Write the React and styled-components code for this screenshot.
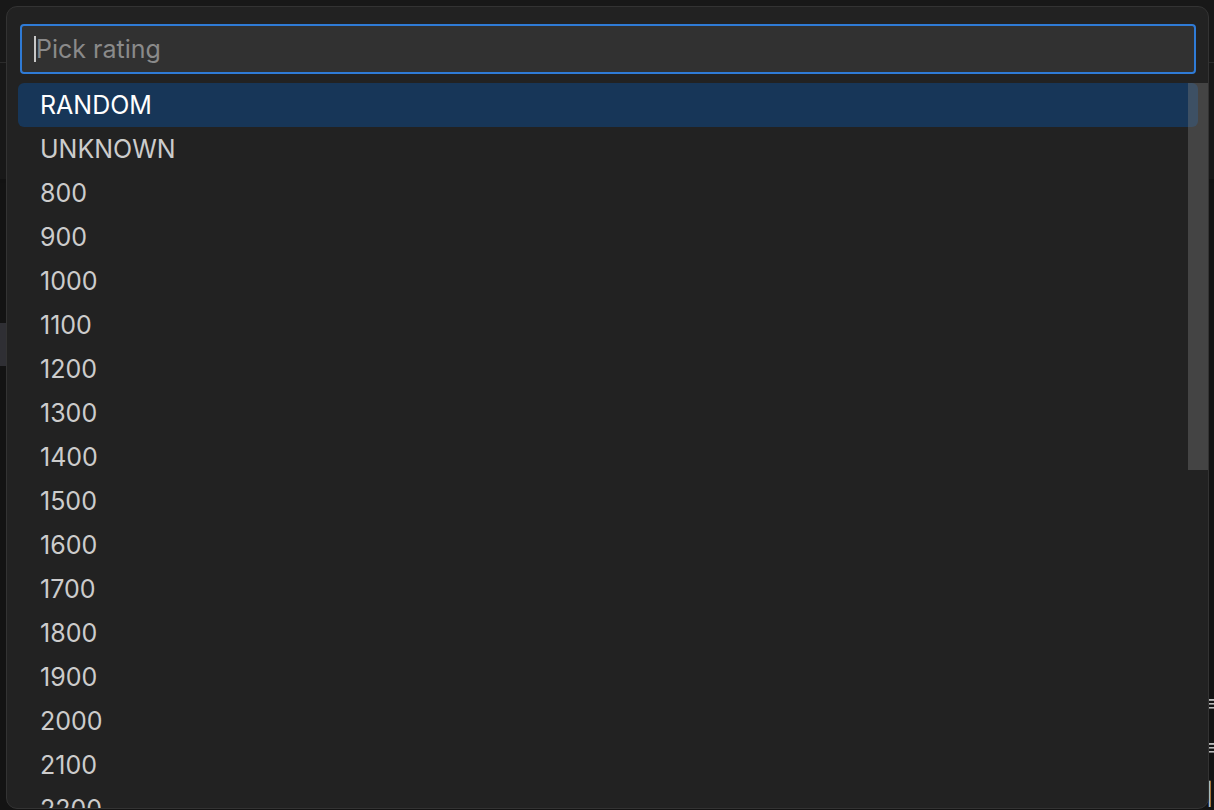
import styled, { createGlobalStyle } from 'styled-components'

const GlobalStyle = createGlobalStyle`
	html, body {
		margin: 0;
		padding: 0;
		background: #181818;
		overflow: hidden;
	}
	#root {
		width: 1214px;
		height: 810px;
	}
`

const ratings = ['RANDOM', 'UNKNOWN']
for (let r = 800; r <= 3500; r += 100) ratings.push(String(r))

const App = () => {
	return (
		<Screen>
			<GlobalStyle />
			<Workbench>
				<TopBar />
				<Toolbar />
				<SideArea>
					<SideItem $top={140} />
					<EdgeGlyph $top={507}>≡</EdgeGlyph>
					<EdgeGlyph $top={551}>≡</EdgeGlyph>
					<EdgeGlyph $top={598}>|</EdgeGlyph>
				</SideArea>
			</Workbench>

			<QuickPick>
				<InputRow>
					<Input>
						<Caret />
						<Placeholder>Pick rating</Placeholder>
					</Input>
				</InputRow>
				<List>
					{ratings.map((label, i) => (
						<Row key={label} $selected={i === 0}>
							{label}
						</Row>
					))}
					<Scrollbar />
				</List>
			</QuickPick>
		</Screen>
	)
}

const Screen = styled.div`
	position: relative;
	width: 1214px;
	height: 810px;
	overflow: hidden;
	font-family: Inter, 'Liberation Sans', sans-serif;
`

const Workbench = styled.div`
	display: flex;
	flex-direction: column;
	height: 100%;
`

const TopBar = styled.div`
	height: 62px;
	background: #181818;
	border-bottom: 1px solid #2b2b2b;
`

const Toolbar = styled.div`
	height: 116px;
	background: #181818;
	border-bottom: 4px solid #121212;
`

const SideArea = styled.div`
	position: relative;
	flex: 1;
	background: #131313;
`

const SideItem = styled.div`
	position: absolute;
	left: 0;
	top: ${p => p.$top}px;
	width: 20px;
	height: 43px;
	background: #2f2f34;
`

const EdgeGlyph = styled.div`
	position: absolute;
	left: 1206px;
	top: ${p => p.$top}px;
	font-size: 22px;
	color: #bbbbbb;
`

const QuickPick = styled.div`
	position: absolute;
	left: 6px;
	top: 6px;
	width: 1203px;
	height: 803px;
	box-sizing: border-box;
	background: #222222;
	border: 1px solid #333333;
	border-radius: 11px;
	overflow: hidden;
	display: flex;
	flex-direction: column;
`

const InputRow = styled.div`
	padding: 17px 12px 9px 13px;
`

const Input = styled.div`
	height: 50px;
	box-sizing: border-box;
	background: #313131;
	border: 2px solid #2f7bd6;
	border-radius: 4px;
	display: flex;
	align-items: center;
	padding-left: 12px;
`

const Caret = styled.span`
	width: 2px;
	height: 26px;
	background: #c8c8c8;
`

const Placeholder = styled.span`
	font-size: 25px;
	color: #8a8a8a;
`

const List = styled.div`
	position: relative;
	flex: 1;
	padding: 0 10px 0 11px;
	overflow: hidden;
`

const Row = styled.div`
	height: 44px;
	display: flex;
	align-items: center;
	padding-left: 22px;
	border-radius: 6px;
	font-size: 25px;
	color: ${p => (p.$selected ? '#ffffff' : '#cccccc')};
	background: ${p => (p.$selected ? '#173658' : 'transparent')};
`

const Scrollbar = styled.div`
	position: absolute;
	top: 0;
	right: 0;
	width: 20px;
	height: 387px;
	background: rgba(121, 121, 121, 0.4);
`

export default App
